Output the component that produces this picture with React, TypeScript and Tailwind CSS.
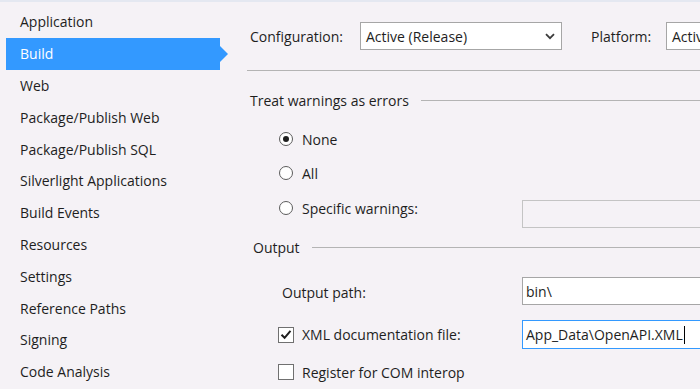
import React from "react";

const navItems = [
  "Application",
  "Build",
  "Web",
  "Package/Publish Web",
  "Package/Publish SQL",
  "Silverlight Applications",
  "Build Events",
  "Resources",
  "Settings",
  "Reference Paths",
  "Signing",
  "Code Analysis",
];

function Chevron() {
  return (
    <svg width="10" height="7" viewBox="0 0 10 7" className="shrink-0">
      <path d="M1 1.2 L5 5.2 L9 1.2" fill="none" stroke="#3c3c3c" strokeWidth="1.8" />
    </svg>
  );
}

function Radio({ checked }: { checked?: boolean }) {
  return (
    <span className="w-[14px] h-[14px] rounded-full border border-[#5c5c5c] bg-white flex items-center justify-center shrink-0">
      {checked && <span className="w-[6px] h-[6px] rounded-full bg-[#1e1e1e]" />}
    </span>
  );
}

function Checkbox({ checked }: { checked?: boolean }) {
  return (
    <span className="w-[16px] h-[16px] border border-[#707070] bg-white flex items-center justify-center shrink-0">
      {checked && (
        <svg width="12" height="11" viewBox="0 0 12 11">
          <path d="M1.5 5.8 L4.6 8.8 L10.5 1.8" fill="none" stroke="#1e1e1e" strokeWidth="2" />
        </svg>
      )}
    </span>
  );
}

function SectionHeader({ title, indent }: { title: string; indent: string }) {
  return (
    <div className={`h-[20px] flex items-center gap-[12px] ${indent}`}>
      <span className="whitespace-nowrap">{title}</span>
      <div className="flex-1 h-px bg-[#b4b4b4]" />
    </div>
  );
}

export default function App() {
  return (
    <div
      className="w-[700px] h-[389px] overflow-hidden bg-[#f5f2f6] border-t-2 border-[#e4e8f1] flex text-[14px] text-[#1e1e1e]"
      style={{ fontFamily: '"Open Sans", "Noto Sans", sans-serif' }}
    >
      {/* nav */}
      <div className="w-[230px] shrink-0 pt-[4px]">
        {navItems.map((item) => {
          const active = item === "Build";
          return (
            <div key={item} className="h-[31.8px] flex items-center">
              {active ? (
                <div className="ml-[6px] h-full flex items-center">
                  <div className="w-[214px] h-full bg-[#3399ff] text-white pl-[14px] flex items-center">
                    {item}
                  </div>
                  <div className="w-0 h-0 border-y-[8px] border-y-transparent border-l-[8px] border-l-[#3399ff]" />
                </div>
              ) : (
                <span className="pl-[20px]">{item}</span>
              )}
            </div>
          );
        })}
      </div>

      {/* content */}
      <div className="flex-1 pl-[17px] flex flex-col min-w-0 overflow-hidden">
        <div className="mt-[20px] h-[28px] flex items-center pl-[3px]">
          <span className="w-[110px] shrink-0 whitespace-nowrap">Configuration:</span>
          <div className="w-[202px] shrink-0 h-[28px] border border-[#a6a6a6] bg-white flex items-center justify-between pl-[5px] pr-[6px]">
            <span>Active (Release)</span>
            <Chevron />
          </div>
          <span className="ml-[29px] w-[75px] shrink-0 whitespace-nowrap">Platform:</span>
          <div className="w-[200px] shrink-0 h-[28px] border border-[#a6a6a6] bg-white flex items-center pl-[5px]">
            <span className="whitespace-nowrap">Active (Any CPU)</span>
          </div>
        </div>

        <div className="mt-[20px] h-px bg-[#b4b4b4]" />

        <div className="mt-[19px]">
          <SectionHeader title="Treat warnings as errors" indent="pl-[3px]" />
        </div>

        <div className="mt-[15px] h-[28px] flex items-center pl-[32px] gap-[9px]">
          <Radio checked />
          <span>None</span>
        </div>
        <div className="mt-[6px] h-[28px] flex items-center pl-[32px] gap-[9px]">
          <Radio />
          <span>All</span>
        </div>
        <div className="mt-[7px] h-[34px] flex items-start">
          <div className="w-[275px] shrink-0 h-[28px] flex items-center pl-[32px] gap-[9px]">
            <Radio />
            <span>Specific warnings:</span>
          </div>
          <div className="self-end w-[220px] shrink-0 h-[28px] border border-[#c4c4c4] bg-[#f5f2f6]" />
        </div>

        <div className="mt-[9px]">
          <SectionHeader title="Output" indent="pl-[6px]" />
        </div>

        <div className="mt-[20px] h-[28px] flex items-center">
          <span className="w-[275px] shrink-0 pl-[35px] mt-[3px]">Output path:</span>
          <div className="w-[220px] shrink-0 h-[28px] border border-[#a6a6a6] bg-white flex items-center pl-[3px]">
            <span>bin\</span>
          </div>
        </div>

        <div className="mt-[15px] h-[29px] flex items-center">
          <div className="w-[275px] shrink-0 flex items-center pl-[31px] gap-[8px]">
            <Checkbox checked />
            <span>XML documentation file:</span>
          </div>
          <div className="w-[220px] shrink-0 h-[29px] border border-[#3399ff] bg-white flex items-center pl-[3px]">
            <span>App_Data\OpenAPI.XML</span>
            <span className="w-px h-[18px] bg-black ml-[1px]" />
          </div>
        </div>

        <div className="mt-[9px] h-[28px] flex items-center pl-[31px] gap-[8px]">
          <Checkbox />
          <span>Register for COM interop</span>
        </div>
      </div>
    </div>
  );
}
